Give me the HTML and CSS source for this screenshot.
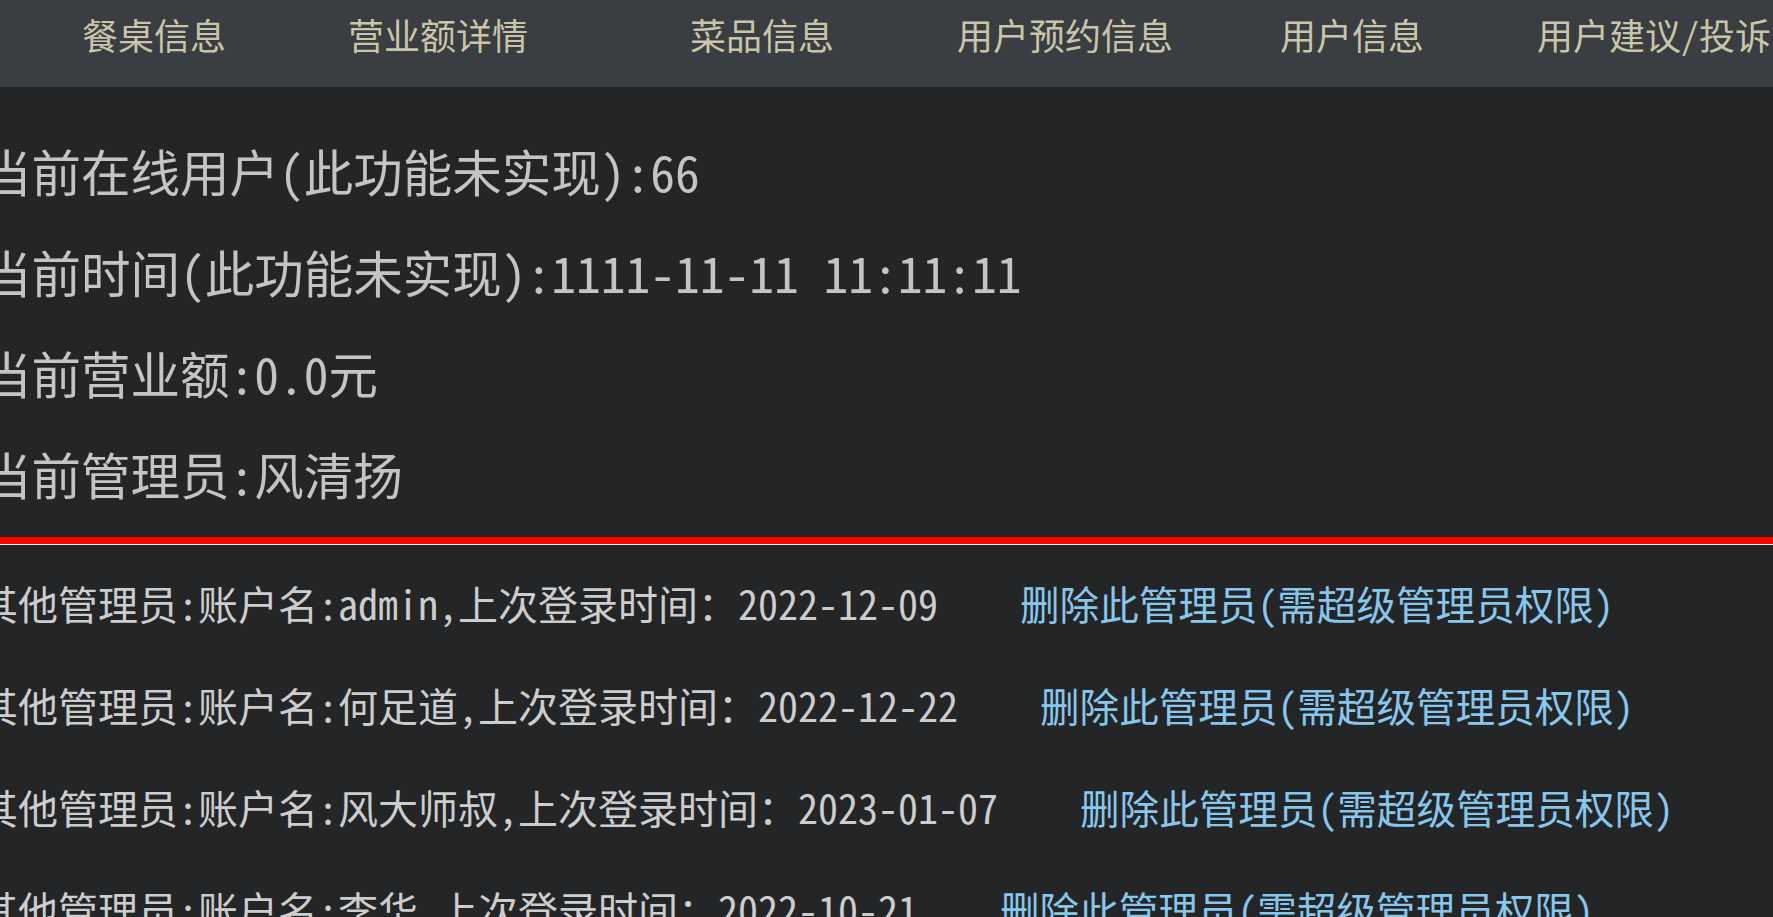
FILE: index.html
```html
<!DOCTYPE html>
<html lang="zh-CN">
<head>
<meta charset="utf-8">
<title>管理员主页</title>
<link rel="stylesheet" href="styles.css">
</head>
<body>
<nav class="topnav">
  <a class="nav-item" href="#">餐桌信息</a>
  <a class="nav-item" href="#">营业额详情</a>
  <a class="nav-item" href="#">菜品信息</a>
  <a class="nav-item" href="#">用户预约信息</a>
  <a class="nav-item" href="#">用户信息</a>
  <a class="nav-item" href="#">用户建议/投诉</a>
</nav>
<section class="stats">
  <p class="stat">当前在线用户(此功能未实现):66</p>
  <p class="stat">当前时间(此功能未实现):1111-11-11 11:11:11</p>
  <p class="stat">当前营业额:0.0元</p>
  <p class="stat">当前管理员:风清扬</p>
</section>
<div class="divider"></div>
<ul class="admins">
  <li class="admin">其他管理员:账户名:admin,上次登录时间：2022-12-09<a class="admin-del" href="#">删除此管理员(需超级管理员权限)</a></li>
  <li class="admin">其他管理员:账户名:何足道,上次登录时间：2022-12-22<a class="admin-del" href="#">删除此管理员(需超级管理员权限)</a></li>
  <li class="admin">其他管理员:账户名:风大师叔,上次登录时间：2023-01-07<a class="admin-del" href="#">删除此管理员(需超级管理员权限)</a></li>
  <li class="admin">其他管理员:账户名:李华,上次登录时间：2022-10-21<a class="admin-del" href="#">删除此管理员(需超级管理员权限)</a></li>
</ul>
</body>
</html>
```

FILE: styles.css
```css
html, body {
  margin: 0;
  padding: 0;
}

body {
  width: 1773px;
  height: 917px;
  overflow: hidden;
  background: #232526;
  color: #c6c6c6;
  font-family: "Noto Sans Mono CJK SC", "Noto Sans CJK SC", "Liberation Mono", monospace;
  font-weight: 300;
}

.topnav {
  display: grid;
  grid-template-columns: 266px 342px 267px 323px 257px 1fr;
  padding: 10px 0 29px 82px;
  background: #3a3d41;
}

.nav-item {
  font-size: 36px;
  line-height: 48px;
  color: #c9c5aa;
  text-decoration: none;
  white-space: nowrap;
}

.stats {
  margin: 0 0 0 -18px;
  padding-top: 33px;
}

.stat {
  margin: 0;
  font-size: 49.5px;
  line-height: 101px;
  white-space: nowrap;
  color: #c4c4c4;
}

.divider {
  margin-top: 13px;
  height: 7px;
  background: #ff0000;
  border-bottom: 1px solid #ffffff;
}

.admins {
  list-style: none;
  margin: 0 0 0 -22px;
  padding: 7px 0 0;
}

.admin {
  font-size: 40px;
  line-height: 101px;
  white-space: nowrap;
  color: #cdcdcd;
}

.admin-del {
  margin-left: 82px;
  font-size: 39.6px;
  color: #88c6ec;
  text-decoration: none;
}
```
